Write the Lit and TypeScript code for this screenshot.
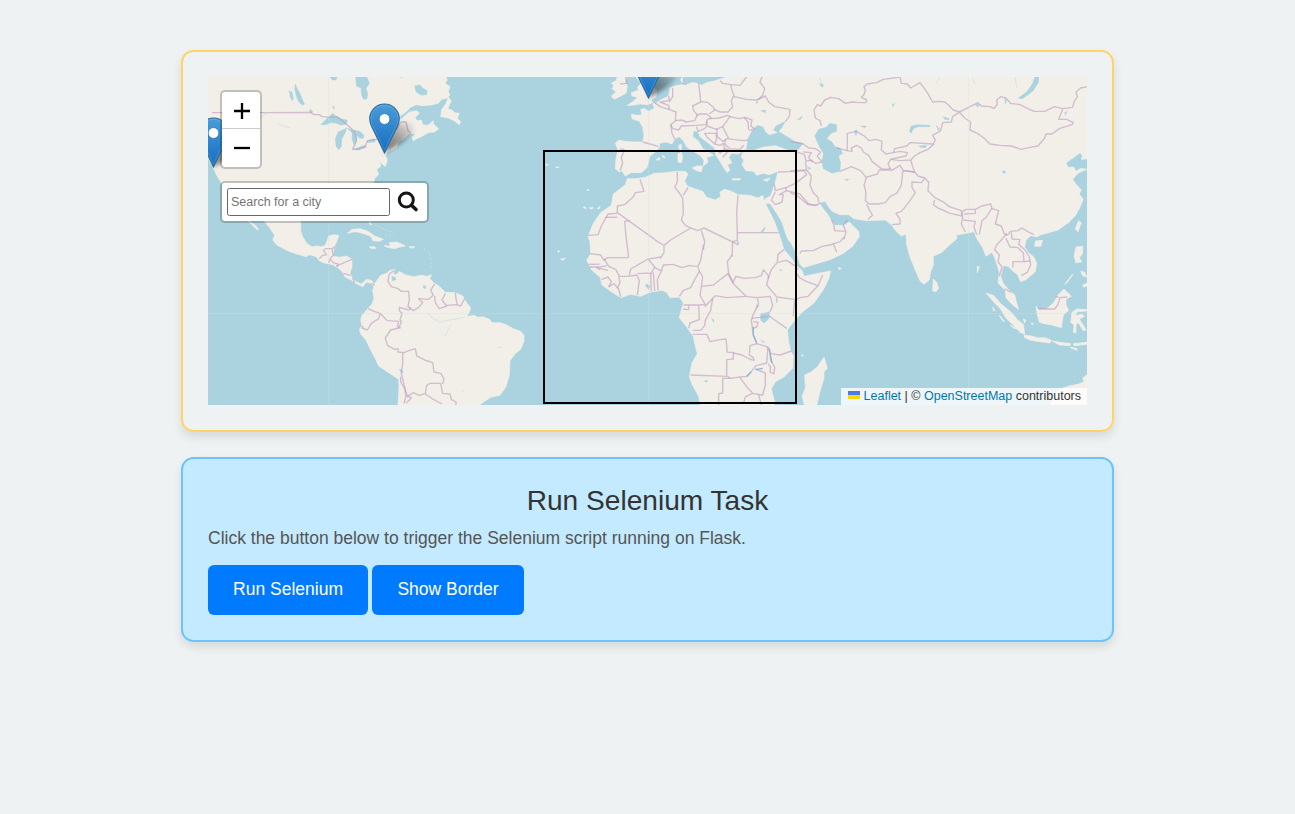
import { LitElement, html, svg, css } from "lit";
import { customElement } from "lit/decorators.js";

type Pair = [number, number];

/** Shift a run of "x,y" pairs so neighbouring map sheets join up. */
const at = (dx: number, dy: number, pts: string): string =>
  pts
    .trim()
    .split(/\s+/)
    .map((p) => p.split(",").map(Number) as Pair)
    .map(([x, y]) => `${x + dx},${y + dy}`)
    .join(" ");

// Western sheet: the lower half starts 450 units down.
const S = (p: string) => at(0, 450, p);
// Eastern sheets: lower half 495 units down, Asia 750 units right.
const AF = (p: string) => at(0, 495, p);
const AS = (p: string) => at(750, 0, p);
const IN = (p: string) => at(750, 495, p);

const westLand: string[] = [
  // North, Central and South America in one outline
  "24,15 464,15 467,35 468,50 482,55 483,75 490,90 502,88 505,72 500,55 510,40 500,15 592,15 600,24 625,21 640,15 735,15 742,30 735,40 750,50 745,65 750,75 740,85 725,88 715,100 695,105 668,107 648,104 632,112 615,128 600,138 598,152 612,140 628,126 650,122 658,130 646,142 650,152 664,150 668,164 684,166 700,152 700,162 716,176 704,186 685,188 668,198 650,206 640,212 636,202 646,192 628,190 612,206 596,216 590,232 576,240 562,246 556,256 562,270 556,290 546,282 540,270 542,290 530,298 536,312 524,326 520,340 490,380 480,400 420,395 360,400 318,420 302,450 " +
    S("302,5 302,32 308,50 320,70 336,80 350,78 364,80 376,76 382,60 386,48 400,44 416,46 412,60 402,82 398,108 418,112 440,108 456,118 456,140 450,160 458,176 470,186 484,192 500,178 516,182 522,194 530,182 542,166 560,160 568,152 584,148 580,162 590,164 598,154 614,164 640,170 664,166 686,170 698,186 716,198 736,217 766,218 788,228 800,248 812,264 808,276 800,290 822,286 834,292 850,290 868,298 876,308 900,308 918,314 940,326 962,334 972,346 972,364 962,388 945,402 930,422 928,465 918,500 900,526 872,532 852,545 832,560 594,560 597,500 596,478 566,458 536,438 528,420 512,390 498,360 482,342 478,328 486,318 482,300 486,286 500,270 516,252 522,236 518,212 522,200 512,190 500,186 488,200 464,188 454,180 436,172 426,154 412,142 398,134 370,128 358,122 348,110 330,104 318,110 290,102 262,92 232,76 218,60 224,46 212,28 190,0") +
    " 150,420 80,370 62,335 50,316 38,290 24,262",
  // Baja California
  S("140,-10 152,8 164,14 176,28 172,30 160,18 148,6 130,-10"),
  // Newfoundland
  "745,82 738,100 725,120 722,140 745,144 762,152 778,164 782,154 772,146 778,130 764,128 756,120 744,118 748,104 754,92",
  // Cuba
  S("442,40 456,28 480,26 504,34 524,48 550,58 538,64 518,62 514,50 494,42 474,36 460,36"),
  // Hispaniola
  S("552,77 572,78 568,68 590,66 604,72 616,78 596,82 584,86 562,82"),
  S("508,80 524,80 528,85 514,86"),
  S("628,80 644,80 640,84 630,84"),
  S("508,4 514,14 510,14"),
  S("684,168 694,164 693,171 686,172"),
];

const westWater: string[] = [
  // Great Lakes
  "362,164 380,146 398,130 408,138 424,146 442,150 440,162 424,166 408,160 392,158 378,164",
  "440,174 428,180 414,186 406,206 408,228 416,240 424,230 426,206 436,188",
  "440,174 460,180 480,184 492,196 490,206 478,204 470,196 470,212 462,226 456,208 456,188",
  "456,240 476,232 496,226 500,232 474,240",
  "500,214 520,206 528,208 524,216 502,218",
  // Manitoba lakes
  "286,42 292,56 300,70 306,86 314,102 308,106 296,96 288,76 284,56",
  "268,62 276,66 280,86 276,92 270,78",
  "330,118 338,124 334,130 328,126",
  "390,21 412,21 408,30 396,30",
  "644,48 660,44 668,54 682,62 680,74 664,76 648,66",
  "398,108 404,112 400,118",
  // Maracaibo and Titicaca
  S("576,168 586,172 588,180 576,182"),
  S("598,448 606,450 610,458 602,456"),
  S("670,196 678,198 676,206 670,204"),
];

const westBorders: string[] = [
  "36,128 180,128 332,127 342,134 358,134 366,140 398,142 410,140 424,150 436,160 448,170 462,184 470,206 466,222 458,236 476,238 496,228 502,212 530,208 546,192 560,184 590,178 602,156 618,156 624,182 632,190",
  S("358,116 368,106 380,104 370,92 376,86 398,86 402,80"),
  S("396,88 400,106 392,114 386,128"),
  S("392,118 400,128 414,132 410,140"),
  S("410,138 432,128 456,118"),
  S("430,160 452,166"), S("458,174 464,188"), S("514,190 524,196"),
  S("582,152 568,162 564,184 574,200 594,206 604,214 626,214 628,238 624,260 632,266 626,270 598,262 598,272 606,280 600,300 604,304 596,326"),
  S("628,262 640,272 656,262 668,248 656,236 686,238 700,226 692,210 704,192"),
  S("704,228 706,248 718,266 740,258 726,240 736,220"),
  S("740,256 770,254 782,258 794,236"), S("766,218 768,236 772,254"),
  S("504,266 522,274 540,280 562,302 596,304 592,320 602,324"),
  S("540,280 536,296 514,310 502,330 486,324 490,318"),
  S("596,324 572,330 556,354 562,376 584,388 594,386 594,396 612,398 626,392 646,386 650,408 674,420 698,428 702,456 722,460 732,476 728,492"),
  S("608,398 608,430 604,460 612,494 622,530 640,518 658,526 676,520 680,496 690,490 722,490 728,520 750,522 754,538 768,546 768,560"),
  S("602,470 602,486 614,506 618,528 612,550"),
  S("676,522 700,538 726,552"), S("622,528 634,534 618,550"),
];

const eastLand: string[] = [
  // Ireland
  "234,15 260,15 256,34 262,50 258,70 238,80 222,88 214,78 228,66 216,56 222,46 214,40 228,32",
  // Great Britain
  "282,15 294,28 304,40 292,52 296,60 274,68 276,78 292,82 280,94 262,106 276,106 300,102 322,104 338,98 334,90 348,80 350,62 340,50 346,15",
  // Mainland Europe and Asia
  "430,15 422,30 430,44 410,46 390,54 386,78 362,90 350,98 338,102 344,114 326,124 314,116 302,118 306,134 290,136 274,132 276,146 298,154 308,172 312,196 308,216 282,216 254,214 236,210 226,220 234,240 228,266 226,296 238,306 246,302 256,318 274,308 304,308 320,294 326,276 330,258 346,246 358,232 358,220 378,216 396,222 404,206 418,200 430,212 440,230 456,242 480,256 492,270 490,288 504,276 500,262 520,256 500,242 488,236 476,214 458,200 460,182 474,184 480,200 506,220 524,234 528,256 540,274 550,292 562,308 570,300 562,284 576,278 566,262 576,250 596,252 610,240 604,262 612,270 606,284 618,302 640,304 650,316 670,310 688,314 714,304 708,330 700,354 692,378 676,386 672,400 690,400 710,430 726,456 736,488 746,512 " +
    AF("752,22 772,60 780,88 790,98 830,86 870,74 908,56 938,34 958,5") +
    " " +
    AS("208,500 206,484 190,468 178,456 160,466 134,466 122,448 112,432 96,412 88,398 106,394 114,408 126,424 150,434 176,434 192,446 230,452 286,450 304,464 320,486 334,498 348,492") +
    " " +
    IN("350,30 360,66 378,110 390,138 402,148 418,134 422,110 430,90 430,64 456,52 478,30 500,12 500,0 530,-5 552,-10 560,10 578,38 588,64 606,52 614,68 622,92 628,112 624,144 636,156 646,166 648,188 664,206 686,224 680,204 674,180 656,164 640,146 632,124 640,92 654,94 668,108 682,118 692,140 708,134 736,110 740,84 732,66 716,54 704,36 708,16 722,2 740,6 750,0") +
    " " +
    AS("770,490 804,480 838,456 858,434 870,412 880,388 868,372 874,360 856,340 848,328 864,310 890,298 900,298 900,15"),
  // Sicily, Sardinia, Corsica, Crete, Cyprus, Balearics
  "456,294 470,288 488,288 484,306 470,302", "414,252 424,246 428,262 424,278 414,276", "416,226 424,222 424,240 418,238",
  "576,326 602,326 600,330 578,330", "670,330 690,324 682,334", "348,270 358,262 360,270", "376,264 366,260 370,256",
  // Africa
  "262,326 286,326 316,322 342,310 376,308 410,304 436,304 444,312 434,332 442,348 464,356 488,364 500,382 526,390 542,380 540,366 554,358 574,364 594,374 630,376 654,384 668,376 674,396 688,424 704,456 716,490 724,512 " +
    AF("732,44 756,72 768,92 786,106 792,124 840,114 872,108 866,132 850,164 822,204 786,232 766,254 742,284 746,320 752,348 760,362 758,400 732,426 706,440 694,462 704,500 704,520 482,520 476,484 456,448 448,426 456,384 472,356 464,326 460,304 440,276 418,248 424,224 430,204 418,186 390,188 380,172 366,166 330,172 302,184 272,178 242,188 214,170 186,150 180,126 156,106 140,76 152,56 150,20 144,4") +
    " 160,460 182,428 214,406 220,372 256,344",
  // Madagascar
  AF("852,366 862,400 852,410 852,430 840,470 828,520 796,520 786,484 796,460 794,420 812,412 832,396"),
  // Sri Lanka
  IN("430,132 440,142 446,160 438,170 428,168"),
  // Sumatra, Java and the lesser islands
  IN("588,174 612,182 632,206 664,232 682,254 700,268 704,298 690,292 668,268 650,252 630,220 612,202"),
  IN("702,300 720,302 744,308 766,308 784,316 780,324 750,320 722,316 704,308"),
  IN("786,318 810,322 842,326 840,332 808,330"), IN("850,326 890,322 892,328 852,332"), IN("840,336 860,340 862,346 844,340"),
  // Borneo, Sulawesi, Philippines, Hainan, Taiwan
  IN("738,214 748,226 770,222 790,204 804,180 822,162 844,184 828,192 828,210 836,226 820,240 814,278 786,270 762,266 748,262 742,240"),
  IN("846,232 860,222 892,224 890,228 862,230 856,242 876,238 884,244 868,252 888,284 880,288 866,264 858,268 858,294 850,292 852,270 842,262"),
  IN("858,36 878,34 878,56 868,68 876,80 858,84 852,64"), IN("872,108 884,112 890,126 878,122"), IN("878,150 892,144 892,154 880,156"),
  IN("850,118 830,144 824,148 846,120"),
  IN("736,18 758,16 752,34 734,34"),
  AS("866,452 874,458 864,486 856,476"),
  IN("700,252 708,256 704,264"), IN("724,264 730,266 726,270"), IN("608,216 616,228 610,226"), IN("628,240 644,260 636,256"), IN("682,282 672,280 660,270"),
  // Australia
  IN("892,418 878,430 882,440 864,448 840,452 810,462 790,480 780,530 900,530"),
  IN("144,98 154,100 148,104"), IN("562,92 568,96 562,114"),
  // Canary and Cape Verde dots
  "130,412 136,410 138,418", "148,414 160,412 156,418", "172,416 180,408 178,416", "142,358 148,360 142,362", "16,282 26,284 18,286", "48,290 58,292 48,294",
  AF("54,46 60,50 54,52"), AF("62,72 76,70 68,76"), AF("786,358 790,362 786,364"),
];

const eastWater: string[] = [
  // Baltic
  "430,15 570,15 540,26 520,32 500,36 486,44 470,38 458,36 440,42 428,40",
  // Black Sea and Azov
  "620,236 624,206 636,182 652,166 668,170 676,186 688,196 700,192 714,188 700,180 708,168 736,154 726,172 716,184 738,198 764,214 790,220 770,244 740,238 706,226 670,230 640,240 610,246",
  // Caspian
  AS("120,160 140,164 140,184 124,190 110,206 124,214 136,230 150,234 158,250 146,258 152,280 150,304 126,310 100,296 96,276 100,250 88,230 74,198 86,178 108,172"),
  // Bohai
  AS("870,250 848,266 830,278 834,290 852,290 858,302 872,294 892,296 892,268 872,270 876,256"),
  // Baikal
  AS("746,15 746,36 730,62 698,86 684,84 710,66 728,40 736,15"),
  // Balkhash
  AS("358,184 364,168 382,164 420,166 420,170 384,170 370,176 364,190"),
  AS("386,228 410,226 406,234 392,232"), AS("636,304 644,302 648,308 640,310"), AS("212,168 230,168 224,174"), AS("438,166 450,178 446,182"),
  AS("460,140 478,146 476,150 464,148"), AS("556,102 570,104 562,112"), AS("90,40 100,44 98,52 92,48"), AS("824,128 832,124 826,136"),
  AS("164,328 178,328 170,332"), AS("22,150 36,138 32,148"), AS("0,218 16,222 14,240 -4,240"),
  AS("192,182 202,180 198,198"), AS("52,290 62,294 58,300"), AS("644,86 650,90 646,102"), AS("306,104 314,100 310,110"),
  // African lakes
  AF("662,236 690,230 686,252 672,264 662,256"), AF("650,210 656,212 650,222"), AF("708,188 714,196 710,204"), AF("492,438 504,436 500,442"),
  AF("718,104 726,104 722,108"), AF("514,248 522,256 520,262"), AF("320,146 330,154 326,164 316,152"),
  AF("662,314 674,322 668,322"),
  "662,122 678,120 676,128", "650,92 654,98 648,100", "662,486 676,470 672,484",
];

const eastBorders: string[] = [
  "256,15 260,40 240,42",
  "308,216 330,222 356,230", "240,236 254,240 244,262 248,280 240,302",
  "344,98 360,110 380,116 408,126 406,152 392,164 396,190 404,208", "386,78 388,92 360,96 386,106 388,118",
  "398,54 398,80 388,96", "476,40 480,74 482,96 458,108 462,124 472,134 464,152 438,156 426,150 406,152",
  "426,40 440,44", "392,164 398,176 416,180 424,168 466,166 498,164 502,148 514,144 500,132 478,132 470,138",
  "482,94 504,98 520,112 524,120 508,132", "522,118 540,126 564,126 578,110 574,92 582,76 576,60 572,44 548,40 540,32",
  "508,146 538,144 562,136 572,140", "500,152 502,168 528,178 548,170 570,140 598,146 616,142 636,150 632,168 644,176 628,182",
  "582,80 620,88 650,90 676,78 686,96 704,110 750,118 748,140 736,154", "572,44 600,46 624,15", "668,15 660,36 674,56 668,76 654,90",
  "470,170 474,184 494,176 500,168", "492,190 528,190 530,206 524,222 500,200 494,190", "530,176 532,200 548,214 556,210 560,206 610,212 624,210",
  "548,170 566,206", "556,208 554,222 570,236 600,238 612,226", "524,222 540,226 550,220 554,236 540,250 534,242", "552,236 568,240 548,262",
  "612,142 624,156 626,180",
  // Levant, Caucasus
  "714,306 768,304 792,302 800,314 766,340 740,352 706,362 702,340", "706,366 694,390 706,404 726,396 730,374 718,374 740,362 736,352", "740,362 780,372 806,402 828,406 842,398",
  AS("0,214 40,222 56,234 76,236 92,246 82,258 96,276 76,280 64,270 48,274 44,254 20,246"),
  AS("40,246 64,248 56,262 66,276"), AS("46,276 50,300 64,318 60,346 70,368 84,382 86,396"), AS("0,302 50,300"), AS("0,368 20,376 54,404 82,406"),
  // Central Asia
  AS("94,168 90,152 76,144 72,120 82,104 92,108 104,90 122,82 146,86 166,100 186,96 210,98 228,98 230,90 214,82 222,74 226,60 222,50 232,42 260,38 280,28 330,21 334,40 352,42 362,54 390,38 412,68 428,96 446,94 464,96 476,106 490,120 508,126"),
  AS("508,126 536,112 564,98 574,108 600,110 612,116 622,102 620,90 632,80 648,84 662,100 690,104 706,112 732,124 764,124 794,110 818,116 848,112 852,96 862,80 858,66 872,54 892,50"),
  AS("508,126 524,144 542,156 540,180 562,190 582,204 600,222 630,226 664,228 694,238 720,232 744,228 764,204 768,192 786,192 808,176 846,164 850,158 830,148 806,148 818,118"),
  AS("506,128 488,140 484,156 458,158 452,182 428,196 436,210 430,222 360,218 350,228 314,236 310,248 288,252 274,240 276,214 258,208 238,212 220,196 198,184 172,190 172,242 186,244 184,234 200,226 214,234 220,246 236,256 246,274 274,296 286,298 300,296"),
  AS("310,248 330,244 352,248 348,258 318,264 302,268 294,282 304,302 330,286 340,302 374,306"),
  AS("302,268 330,272 362,270 374,258 390,248 414,238 432,222"), AS("362,270 368,290 374,306 384,318 404,324 416,336 414,362 436,384 460,396 478,410 514,422 516,438 480,430 444,414 430,404 434,390"),
  AS("140,234 172,242"), AS("150,304 184,290 212,302 228,322 262,312 268,300 300,300"),
  AS("230,322 222,344 228,368 226,392 238,402 264,402 286,398 300,380 320,370 334,346 338,306 342,302 374,306"), AS("230,402 238,420 248,436 234,448"),
  AS("404,326 394,338 366,336 366,352 376,368 360,392 346,410 334,424 318,430 330,448 330,462 306,464"),
  AS("518,424 528,418 556,418 576,408 602,402 606,416 626,422 616,462 634,468 642,490 652,496"), AS("522,432 556,430 556,420"), AS("516,424 518,442 514,462 526,486"), AS("520,450 556,454 552,470 560,494"), AS("606,414 590,440 576,452 568,494"),
  AS("652,496 662,484 684,482 696,474 712,484 732,494"), AS("124,448 132,466 134,482 164,484"), AS("172,450 160,466 168,486 162,508"),
  // Indochina and Borneo
  IN("650,-4 640,8 620,30 614,44 628,60 624,80 636,96 628,124"), IN("648,10 660,36 684,38 700,54 702,80 670,80 668,98"), IN("664,-8 666,12 690,14 686,28 706,46 718,66 722,90 712,112 694,122"),
  IN("702,80 720,78"), IN("644,162 664,172"), IN("744,220 768,222 794,222 804,208 810,188 832,186"), IN("796,186 806,186"),
  // Arabia
  AF("780,56 784,48 822,46 846,34 870,30 882,26 900,20 912,6"), AF("880,26 890,52"),
  // North Africa
  "300,328 312,364 286,368 280,380 254,404 232,408 232,428 340,505 348,512 370,525", "232,430 204,432 184,468 174,494 144,496", "232,442 196,442",
  "254,452 258,500 266,562", "256,454 270,452", "412,306 412,336 404,352 416,366 428,384 430,430 424,450 436,466 452,474 392,510 372,526 372,548 360,566", "444,352 430,376",
  "452,474 474,482 492,474 594,524 594,514", "484,482 494,514 490,540", "594,376 590,430 592,488 716,488", "592,488 592,512 578,514 576,560",
  // West Africa
  AF("266,68 202,68 192,76 182,60 150,56"), AF("146,88 178,88"), AF("148,96 180,96 200,92"), AF("192,72 206,94 228,104 238,124 266,124 290,120 298,136 292,180"),
  AF("268,122 272,102 300,86 324,72 334,84 344,96 334,114 292,116"), AF("326,72 362,66"), AF("180,104 170,98 204,106"), AF("184,134 204,126 214,140 206,156"), AF("206,156 222,146 236,162 242,186"), AF("236,124 240,142 232,160"),
  AF("332,114 334,170"), AF("340,112 344,168"), AF("344,98 364,108 352,134 354,166"), AF("364,108 370,90 400,88 426,98 446,92 474,94 482,76 490,30"),
  AF("474,96 478,110 464,134 452,158 430,166 418,184"), AF("478,108 488,126 484,156 480,180 494,206 496,214 518,190 526,182 560,188 618,184 578,144 564,116 520,150 486,154"), AF("430,210 480,210 494,208"), AF("430,222 446,224 446,212"), AF("476,212 478,254 450,264 446,280"),
  AF("518,190 512,226 496,256 494,272 482,286 458,286"), AF("458,298 500,298 510,320 540,314 558,312 562,352 580,352 580,372 560,374 560,424 452,420"),
  AF("580,354 606,360 628,372 642,376 640,368 628,360 630,332 652,326"), AF("578,144 588,124 612,130 646,128 664,122 670,104 680,116 686,124 680,150 702,176 710,186 768,194 780,188"),
  AF("576,60 562,80 566,116 580,142"), AF("712,80 714,58 732,44"), AF("684,132 694,104 712,82 740,76 764,92 774,104"), AF("770,114 778,128 800,140 834,152 848,120"), AF("780,188 804,184 834,152"), AF("764,196 760,244"),
  AF("618,184 650,188 690,184 694,196 698,212 690,230"), AF("652,190 656,206 640,238 634,256 640,300 650,326 684,336 680,384 648,392 622,424 600,426 572,430 548,430 548,474 536,476 536,520"),
  AF("636,250 652,248 690,244 700,252 740,280"), AF("640,260 654,262 650,276 640,280"), AF("692,356 720,360 754,348"), AF("684,386 692,396 690,412 702,416 704,396 692,376 690,350 682,338"),
  AF("600,428 624,460 640,476 668,480 676,450 676,414 646,402"), AF("562,424 572,430"), AF("610,506 616,486 636,476"), AF("656,480 664,510"),
];

const rivers: string[] = [
  "640,275 640,300 650,322", "688,340 692,366 696,384", "620,424 634,410", "646,404 668,400",
];

@customElement("map-pin")
class MapPin extends LitElement {
  static styles = css`
    :host { display: block; width: 60px; height: 52px; }
    svg { display: block; overflow: visible; }
  `;
  render() {
    return html`<svg width="60" height="52" viewBox="0 0 60 52">
      <defs>
        <linearGradient id="body" x1="0" y1="0" x2="0" y2="1">
          <stop offset="0" stop-color="#4a9dd8" />
          <stop offset=".6" stop-color="#2a7fca" />
          <stop offset="1" stop-color="#126fc6" />
        </linearGradient>
        <linearGradient id="shade" gradientUnits="userSpaceOnUse" x1="16" y1="50" x2="45" y2="20">
          <stop offset="0" stop-opacity=".55" />
          <stop offset=".45" stop-opacity=".36" />
          <stop offset="1" stop-opacity="0" />
        </linearGradient>
        <filter id="soft" x="-30%" y="-30%" width="160%" height="160%"><feGaussianBlur stdDeviation="2" /></filter>
      </defs>
      <path d="M15.500 50 L22 26 C28 19 42 17 45 21 C47 27 41 34 33 40 Z" fill="url(#shade)" filter="url(#soft)" />
      <path d="M15.500 1C7.300 1 .7 7.600.7 15.700c0 3.100.9 5.600 2.200 8.200L15.500 50 28.100 23.900c1.300-2.600 2.200-5.100 2.200-8.200C30.300 7.600 23.700 1 15.500 1z" fill="url(#body)" stroke="#2e6c97" stroke-width="1.100" />
      <path d="M15.500 2.300C8 2.300 2 8.300 2 15.700c0 2.900.8 5.200 2.100 7.700L15.500 47 26.900 23.400c1.300-2.500 2.100-4.800 2.100-7.700C29 8.300 23 2.300 15.500 2.300z" fill="none" stroke="#fff" stroke-opacity=".14" />
      <circle cx="15.500" cy="16" r="5.400" fill="#fff" stroke="#2c74b0" stroke-width=".8" />
    </svg>`;
  }
}

@customElement("world-map")
class WorldMap extends LitElement {
  static styles = css`
    :host { display: block; width: 100%; height: 100%; }
    svg { display: block; width: 100%; height: 100%; }
    .land polygon { fill: #f2efe9; stroke: #f2efe9; stroke-width: 2; stroke-linejoin: round; }
    .water polygon { fill: #abd3df; stroke: #abd3df; stroke-width: 1; stroke-linejoin: round; }
    .borders polyline { fill: none; stroke: #bc9cbc; stroke-opacity: .6; stroke-width: 4.2; stroke-linejoin: round; }
    .rivers polyline { fill: none; stroke: #8fb4d6; stroke-width: 4; }
    .grid line { stroke: #d5dfe2; stroke-opacity: .3; stroke-width: 1; }
  `;
  private sheet(x: number, land: string[], water: string[], borders: string[], streams: string[]) {
    return svg`<g transform="translate(${x} 70) scale(.33333)">
      <g class="land">${land.map((p) => svg`<polygon points=${p} />`)}</g>
      <g class="water">${water.map((p) => svg`<polygon points=${p} />`)}</g>
      <g class="borders">${borders.map((p) => svg`<polyline points=${p} />`)}</g>
      <g class="rivers">${streams.map((p) => svg`<polyline points=${AF(p)} />`)}</g>
    </g>`;
  }
  render() {
    return html`<svg viewBox="208 77 879 328" preserveAspectRatio="none" aria-hidden="true">
      <defs>
        <filter id="coast" filterUnits="userSpaceOnUse" x="198" y="67" width="899" height="348" color-interpolation-filters="sRGB">
          <feGaussianBlur stdDeviation=".5" />
        </filter>
      </defs>
      <rect x="208" y="77" width="879" height="328" fill="#abd3df" />
      <g filter="url(#coast)">
        ${this.sheet(200, westLand, westWater, westBorders, [])}
        ${this.sheet(540, eastLand, eastWater, eastBorders, rivers)}
      </g>
      <g fill="none" stroke="#d9e3e2" stroke-opacity=".6" stroke-width="1" stroke-dasharray="2 2">
        <path d="M424 249 C431 252 432 260 431 268" />
        <path d="M371 224 L392 232 M385 236 L394 234" />
      </g>
      <g fill="none" stroke="#abd3df" stroke-opacity=".5" stroke-width=".8" filter="url(#coast)">
        <path d="M428 313 L432 318 440 322 450 320 465 317 M451 324 L445 336 M497 348 L502 347 M461 392 L464 390" />
        <path d="M260 118 L268 112 M278 124 L290 128 M940 77 L936 84 M1015 77 L1017 88 M972 78 L975 84 M820 77 L822 86" />
      </g>
      <g class="grid">
        <line x1="328.500" y1="77" x2="328.500" y2="405" />
        <line x1="648.500" y1="77" x2="648.500" y2="405" />
        <line x1="968.500" y1="77" x2="968.500" y2="405" />
        <line x1="208" y1="313.500" x2="1087" y2="313.500" />
      </g>
    </svg>`;
  }
}

@customElement("app-root")
class AppRoot extends LitElement {
  static styles = css`
    :host {
      display: block;
      box-sizing: border-box;
      min-height: 100vh;
      padding-top: 50px;
      background: #eef2f3;
      font-family: "Liberation Sans", Arial, sans-serif;
    }
    .page { display: flex; flex-direction: column; gap: 25px; width: 933px; margin: 0 auto; }
    .card {
      box-sizing: border-box;
      border: 2px solid #ffd466;
      border-radius: 12.5px;
      padding: 25px;
      box-shadow: 0 5px 10px rgba(0, 0, 0, 0.1);
    }
    .task { border-color: #6cc4ff; background: #c4eaff; height: 185px; }
    .map { position: relative; height: 328px; overflow: hidden; }
    .pin { position: absolute; }
    .pin-west { left: -10px; top: 40px; }
    .pin-east { left: 161px; top: 26px; }
    .pin-london { left: 425px; top: -29px; }
    .bounds { position: absolute; left: 335px; top: 73px; width: 250px; height: 250px; border: 2px solid #000; }
    .controls { position: absolute; left: 12px; top: 13px; display: flex; flex-direction: column; align-items: flex-start; gap: 12px; }
    .box { border: 2px solid rgba(0, 0, 0, 0.2); border-radius: 5px; background: #fff; background-clip: padding-box; }
    .zoom { width: 38px; height: 75px; display: flex; flex-direction: column; }
    .zoom svg { display: block; margin-left: 2px; }
    .zoom-btn { height: 38px; display: grid; place-items: center; }
    .zoom-btn:first-child { box-sizing: border-box; height: 37px; padding-top: 1px; border-bottom: 1px solid #ccc; }
    .search { display: flex; align-items: center; width: 205px; height: 38px; }
    .search input {
      box-sizing: border-box;
      width: 163px;
      height: 28px;
      margin: 0 0 0 5px;
      padding: 0 3px;
      border: 1px solid #666;
      border-radius: 2.5px;
      background: #fff;
      font: 12.500px "Liberation Sans", Arial, sans-serif;
    }
    .search input::placeholder { color: #757575; }
    .search svg { margin-left: 6px; }
    .credit {
      position: absolute;
      right: 0;
      bottom: 0;
      box-sizing: border-box;
      width: 246px;
      height: 17px;
      padding: 0 6px 1px;
      display: flex;
      align-items: center;
      justify-content: flex-end;
      background: rgba(255, 255, 255, 0.8);
      color: #333;
      font-size: 12.5px;
      line-height: 16px;
      white-space: pre;
    }
    .credit svg { margin: 0 4px 2px 0; }
    .link { color: #0078a8; }
    h2 { margin: 0; text-align: center; font-weight: 400; font-size: 28.125px; line-height: 34px; color: #333; }
    p { margin: 7px 0 0; font-size: 17.5px; line-height: 26px; color: #555; }
    .actions { display: flex; gap: 4px; margin-top: 14px; }
    button {
      height: 50px;
      padding: 0 25px 2px;
      border: 0;
      border-radius: 6px;
      background: #007bff;
      color: #fff;
      font: 17.5px "Liberation Sans", Arial, sans-serif;
      white-space: nowrap;
    }
    .run { width: 160px; }
    .show { width: 152px; }
  `;

  render() {
    return html`<main class="page">
      <section class="card">
        <div class="map">
          <world-map></world-map>
          <map-pin class="pin pin-west"></map-pin>
          <map-pin class="pin pin-east"></map-pin>
          <map-pin class="pin pin-london"></map-pin>
          <div class="bounds"></div>
          <div class="controls">
            <div class="box zoom">
              <div class="zoom-btn"><svg width="16" height="16" viewBox="0 0 16 16"><path d="M0 8h16M8 0v16" stroke="#000" stroke-width="2.300" /></svg></div>
              <div class="zoom-btn"><svg width="16" height="16" viewBox="0 0 16 16"><path d="M0 8h16" stroke="#000" stroke-width="2.300" /></svg></div>
            </div>
            <div class="box search">
              <input placeholder="Search for a city" />
              <svg width="24" height="24" viewBox="0 0 24 24" fill="none" stroke="#151515"><circle cx="10.300" cy="10" r="7" stroke-width="3" /><path d="M15.500 15.200 L20 19.500" stroke-width="3.600" stroke-linecap="round" /></svg>
            </div>
          </div>
          <div class="credit"><svg width="12" height="8" viewBox="0 0 12 8"><path fill="#4c7be1" d="M0 0h12v4H0z" /><path fill="#ffd500" d="M0 4h12v4H0z" /></svg><span class="link">Leaflet</span> | © <span class="link">OpenStreetMap</span> contributors</div>
        </div>
      </section>
      <section class="card task">
        <h2>Run Selenium Task</h2>
        <p>Click the button below to trigger the Selenium script running on Flask.</p>
        <div class="actions">
          <button class="run">Run Selenium</button>
          <button class="show">Show Border</button>
        </div>
      </section>
    </main>`;
  }
}
